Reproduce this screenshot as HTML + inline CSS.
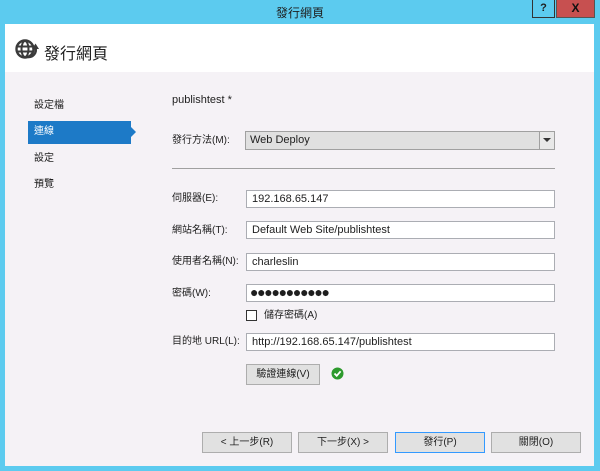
<!DOCTYPE html>
<html><head><meta charset="utf-8"><style>
*{margin:0;padding:0;box-sizing:border-box}
body{width:600px;height:471px;background:#5ccbef;position:relative;overflow:hidden;font-family:"Liberation Sans","Noto Sans CJK TC",sans-serif;font-size:11px;color:#1e1e1e}
.a{position:absolute}
.title{left:0;top:4px;width:600px;text-align:center;font-size:12px;color:#1e1e1e}
.q{left:532px;top:0;width:23px;height:18px;background:#5ccbef;border:1px solid #333;border-top:none;font-weight:bold;text-align:center;font-size:11px;line-height:16px}
.x{left:556px;top:0;width:39px;height:18px;background:#c75050;border:1px solid #555;border-top:none;color:#111;font-weight:bold;text-align:center;line-height:16px;font-size:12px}
.win{left:5px;top:24px;width:589px;height:442px;background:#f5f2f6}
.hdr{left:5px;top:24px;width:589px;height:48px;background:#fff}
.lbl{font-size:10px;line-height:12px}
.inp{left:246px;width:309px;height:18px;background:#fff;border:1px solid #abadb3;padding-left:5px;font-size:11px;line-height:16px}
.btn{top:432px;height:21px;background:#e1e1e1;border:1px solid #adadad;text-align:center;font-size:10px;line-height:19px}
</style></head><body>
<div class="a title">發行網頁</div>
<div class="a q">?</div>
<div class="a x">X</div>
<div class="a win"></div>
<div class="a hdr"></div>
<svg class="a" style="left:14px;top:37px" width="26" height="24" viewBox="0 0 26 24">
<circle cx="11" cy="12" r="8.5" fill="none" stroke="#3a3a3a" stroke-width="2.4"/>
<ellipse cx="11" cy="12" rx="3.5" ry="8" fill="none" stroke="#3a3a3a" stroke-width="2"/>
<line x1="3" y1="9.5" x2="19" y2="9.5" stroke="#3a3a3a" stroke-width="2"/>
<line x1="3" y1="14.5" x2="19" y2="14.5" stroke="#3a3a3a" stroke-width="2"/>
<path d="M14 20 A7 7 0 0 0 21.5 11" fill="none" stroke="#3a3a3a" stroke-width="2.4"/>
<path d="M18 12 L21.5 6.5 L25 12 Z" fill="#3a3a3a"/>
</svg>
<div class="a" style="left:44px;top:40px;font-size:16px;color:#1e1e1e">發行網頁</div>
<div class="a lbl" style="left:34px;top:100px">設定檔</div>
<div class="a" style="left:28px;top:121px;width:103px;height:23px;background:#1d7ac7"></div>
<div class="a" style="left:131px;top:127px;width:0;height:0;border-top:5px solid transparent;border-bottom:5px solid transparent;border-left:5px solid #1d7ac7"></div>
<div class="a lbl" style="left:34px;top:126px;color:#fff">連線</div>
<div class="a lbl" style="left:34px;top:153px">設定</div>
<div class="a lbl" style="left:34px;top:179px">預覽</div>
<div class="a" style="left:172px;top:94px;font-size:11px">publishtest *</div>
<div class="a lbl" style="left:172px;top:135px">發行方法(M):</div>
<div class="a" style="left:245px;top:131px;width:310px;height:19px;background:#e0e0e0;border:1px solid #a0a0a0;padding-left:4px;line-height:17px;font-size:11px">Web Deploy</div>
<div class="a" style="left:539px;top:132px;width:15px;height:17px;border-left:1px solid #a0a0a0;background:#e8e8e8"></div>
<div class="a" style="left:543px;top:138px;width:0;height:0;border-left:4px solid transparent;border-right:4px solid transparent;border-top:4px solid #333"></div>
<div class="a" style="left:172px;top:168px;width:383px;height:1px;background:#a0a0a0"></div>
<div class="a lbl" style="left:172px;top:193px">伺服器(E):</div>
<div class="a inp" style="top:190px">192.168.65.147</div>
<div class="a lbl" style="left:172px;top:225px">網站名稱(T):</div>
<div class="a inp" style="top:221px">Default Web Site/publishtest</div>
<div class="a lbl" style="left:172px;top:256px">使用者名稱(N):</div>
<div class="a inp" style="top:253px">charleslin</div>
<div class="a lbl" style="left:172px;top:288px">密碼(W):</div>
<div class="a inp" style="top:284px;font-size:14px;line-height:15px;letter-spacing:-1.3px;padding-left:3px">●●●●●●●●●●●</div>
<div class="a" style="left:246px;top:310px;width:11px;height:11px;background:#fff;border:1px solid #333"></div>
<div class="a lbl" style="left:264px;top:310px">儲存密碼(A)</div>
<div class="a lbl" style="left:172px;top:336px">目的地 URL(L):</div>
<div class="a inp" style="top:333px">http://192.168.65.147/publishtest</div>
<div class="a btn" style="left:246px;top:364px;width:74px;height:21px">驗證連線(V)</div>
<svg class="a" style="left:331px;top:367px" width="13" height="13" viewBox="0 0 13 13"><circle cx="6.5" cy="6.5" r="6" fill="#2d9a2d"/><path d="M3.5 6.5 L5.7 8.8 L9.6 4.3" fill="none" stroke="#fff" stroke-width="1.8"/></svg>
<div class="a btn" style="left:202px;width:90px">&lt; 上一步(R)</div>
<div class="a btn" style="left:298px;width:90px">下一步(X) &gt;</div>
<div class="a btn" style="left:395px;width:90px;border-color:#3399ff">發行(P)</div>
<div class="a btn" style="left:491px;width:90px">關閉(O)</div>
</body></html>
